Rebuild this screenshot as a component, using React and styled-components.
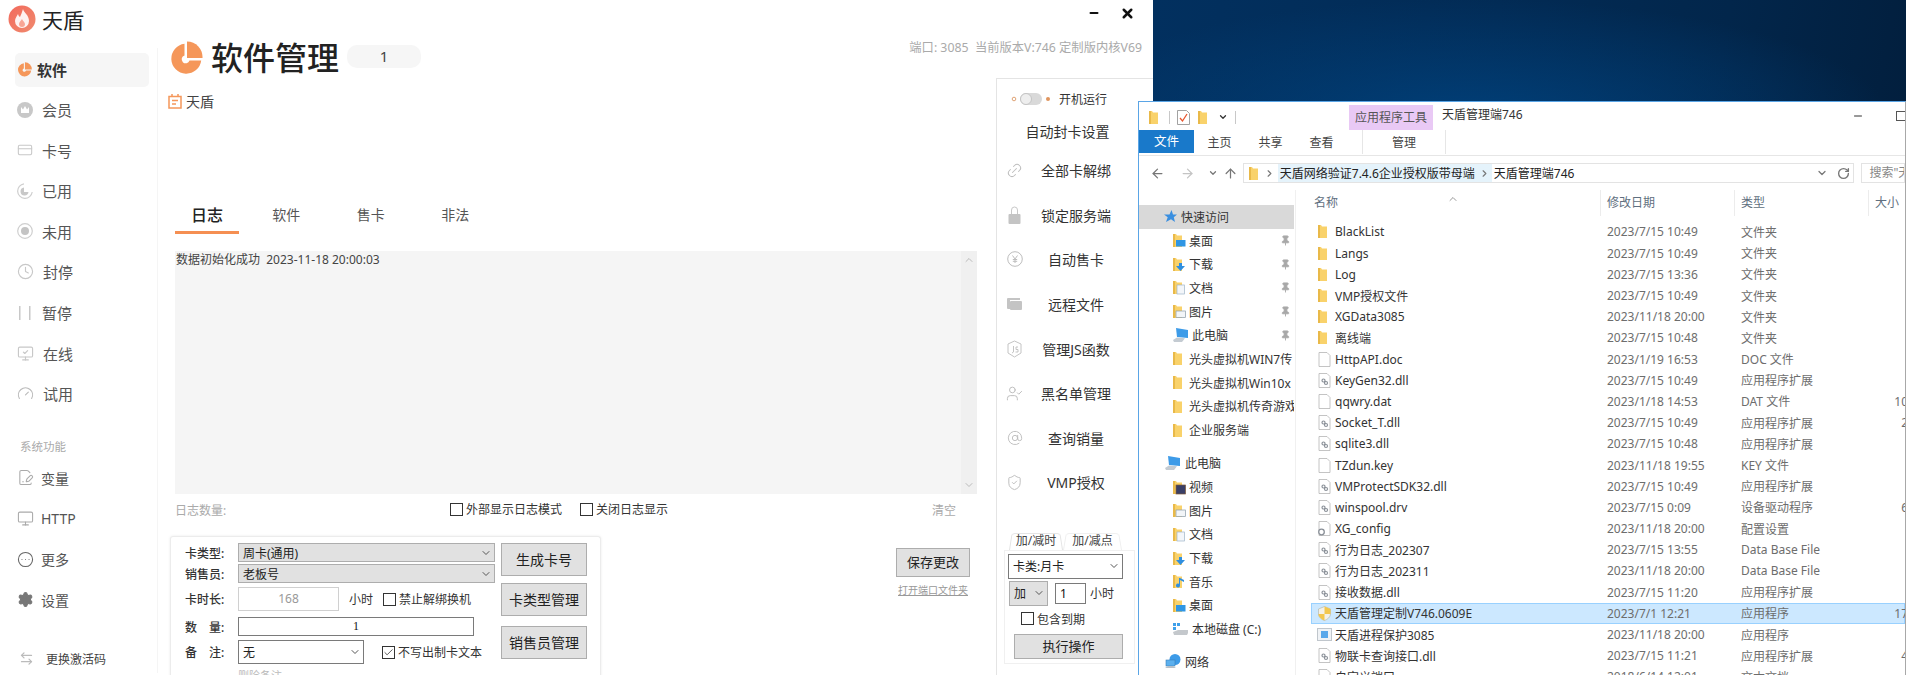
import React from 'react';
import styled, { createGlobalStyle } from 'styled-components';
import {
  Monitor, MonitorCheck, CircleEllipsis, Settings, ArrowLeftRight, Gauge, Clock,
  ArrowLeft, ArrowRight, ArrowUp, ChevronDown, ChevronRight, ChevronUp, RotateCw, Pin, Check, X, Minus,
  Link2, AtSign, ShieldCheck, UserCheck, FilePenLine, CreditCard,
} from 'lucide-react';

const Global = createGlobalStyle`
  html, body { margin: 0; padding: 0; background: #fff; }
  body {
    width: 1910px;
    height: 675px;
    overflow: hidden;
    font-family: "Noto Sans", "Noto Sans CJK SC", sans-serif;
    font-size: 12px;
    color: #333;
  }
  * { box-sizing: border-box; }
  svg { flex: none; }
`;

/* ---------- desktop ---------- */
const Desktop = styled.div`
  position: relative;
  display: flex;
  width: 1910px;
  height: 675px;
  overflow: hidden;
  background: #fff;
  filter: blur(0.4px);
`;
const Wallpaper = styled.div`
  width: 753px;
  height: 101px;
  background:
    radial-gradient(ellipse 420px 120px at 42% 118%, #013f78 0%, rgba(1, 60, 115, 0) 100%),
    linear-gradient(100deg, #02305f 0%, #022b55 45%, #02264b 75%, #021f3e 100%);
`;

/* ---------- app window ---------- */
const AppWindow = styled.div`
  display: flex;
  width: 1153px;
  height: 675px;
  background: #fff;
`;
const Sidebar = styled.aside`
  width: 158px;
  height: 675px;
  flex: none;
`;
const Brand = styled.div`
  display: flex;
  align-items: center;
  gap: 6px;
  height: 38px;
  padding-left: 8px;
  font-size: 21px;
  color: #222;
`;
const SideBody = styled.div`
  height: 625px;
  margin-top: 10px;
  padding-top: 5px;
  border-right: 1px solid #f5f5f5;
`;
const Nav = styled.nav`
  margin-left: 15px;
  width: 134px;
`;
const NavItem = styled.div`
  display: flex;
  align-items: center;
  height: 34px;
  margin-bottom: 6.6px;
  padding: 0 0 2px 2px;
  gap: ${p => (p.$active ? 5 : p.$sys ? 7 : 9)}px;
  border-radius: 5px;
  background: ${p => (p.$active ? '#f6f6f6' : 'transparent')};
  font-size: ${p => (p.$sys ? 14 : 15)}px;
  font-weight: ${p => (p.$active ? 600 : 400)};
  color: ${p => (p.$active ? '#333' : '#555')};
`;
const SectionLabel = styled.div`
  height: 16px;
  line-height: 16px;
  margin: 27.2px 0 7px 5px;
  font-size: 11.5px;
  color: #aaa;
`;
const SwapRow = styled.div`
  display: flex;
  align-items: center;
  gap: 12px;
  height: 20px;
  margin-top: 31px;
  margin-left: 19px;
  font-size: 12px;
  color: #444;
`;

const Main = styled.main`
  flex: 1;
  display: flex;
  flex-direction: column;
  min-width: 0;
`;
const WindowControls = styled.div`
  display: flex;
  justify-content: flex-end;
  align-items: center;
  gap: 20px;
  height: 26px;
  padding-right: 18px;
  color: #111;
`;
const TitleRow = styled.div`
  display: flex;
  align-items: center;
  height: 52px;
  padding: 12px 11px 0 11px;
`;
const PageTitle = styled.h1`
  margin: 0 8px 0 8px;
  font-size: 32px;
  font-weight: 500;
  line-height: 40px;
  color: #222;
`;
const CountPill = styled.div`
  width: 74px;
  height: 23px;
  line-height: 23px;
  margin-top: -4px;
  text-align: center;
  border-radius: 10px;
  background: #f6f6f6;
  font-size: 15px;
  color: #444;
`;
const PortInfo = styled.div`
  align-self: flex-start;
  margin-left: auto;
  margin-top: 1px;
  line-height: 18px;
  font-size: 12.3px;
  color: #aaa;
  white-space: pre;
`;
const Body = styled.div`
  flex: 1;
  display: flex;
  min-height: 0;
`;
const LeftCol = styled.div`
  width: 838px;
  flex: none;
`;
const Subtitle = styled.div`
  display: flex;
  align-items: center;
  gap: 4px;
  height: 18px;
  margin: 14px 0 0 10px;
  font-size: 14px;
  color: #444;
`;
const Tabs = styled.div`
  display: flex;
  height: 33px;
  margin: 91px 0 0 17px;
`;
const Tab = styled.div`
  width: ${p => (p.$active ? 64 : 84.5)}px;
  margin-right: ${p => (p.$active ? 5 : 0)}px;
  height: 33px;
  line-height: 28px;
  text-align: center;
  font-size: ${p => (p.$active ? 16 : 14)}px;
  font-weight: ${p => (p.$active ? 500 : 400)};
  color: ${p => (p.$active ? '#222' : '#555')};
  border-bottom: ${p => (p.$active ? '3px solid #f58f52' : 'none')};
`;
const LogBox = styled.div`
  display: flex;
  width: 802px;
  height: 243px;
  margin: 17px 0 0 17px;
  background: #f5f5f5;
`;
const LogText = styled.div`
  flex: 1;
  padding: 1px;
  line-height: 16px;
  font-size: 12px;
  color: #444;
  white-space: pre;
`;
const LogScroll = styled.div`
  display: flex;
  flex-direction: column;
  justify-content: space-between;
  align-items: center;
  width: 16px;
  padding: 3px 0;
  background: #f0f0f0;
  color: #bbb;
`;
const LogFooter = styled.div`
  display: flex;
  align-items: center;
  height: 32px;
  margin-left: 17px;
  width: 802px;
`;
const FootCell = styled.div`
  width: ${p => p.$w}px;
  flex: none;
  color: ${p => (p.$muted ? '#aaa' : '#333')};
`;
const ClearLink = styled.div`
  margin-left: auto;
  margin-right: 21px;
  color: #aaa;
`;
const BottomRow = styled.div`
  display: flex;
  margin-top: 10px;
`;
const Card = styled.div`
  display: flex;
  width: 431px;
  height: 160px;
  margin-left: 12px;
  padding: 6px 0 0 14px;
  border: 1px solid #ececec;
  border-bottom: none;
  border-radius: 3px 3px 0 0;
  box-shadow: 0 0 3px rgba(0, 0, 0, 0.08);
`;
const FormCol = styled.div`
  width: 310px;
  flex: none;
`;
const FormRow = styled.div`
  display: flex;
  align-items: center;
  margin-top: ${p => p.$mt || 0}px;
`;
const FieldLabel = styled.div`
  width: 53px;
  flex: none;
  white-space: pre;
  font-weight: 500;
  color: #333;
`;
const NativeSelect = styled.div`
  display: flex;
  align-items: center;
  justify-content: space-between;
  width: ${p => p.$w}px;
  height: ${p => p.$h}px;
  margin-left: ${p => p.$ml || 0}px;
  padding: 0 2px 0 4px;
  flex: none;
  border: 1px solid ${p => (p.$gray ? '#adadad' : '#7a7a7a')};
  background: ${p => (p.$gray ? '#e1e1e1' : '#fff')};
  color: #222;
  white-space: nowrap;
  svg { color: #555; }
`;
const NativeInput = styled.div`
  width: ${p => p.$w}px;
  height: ${p => p.$h}px;
  margin-left: ${p => p.$ml || 0}px;
  flex: none;
  line-height: ${p => p.$h - 2}px;
  text-align: ${p => p.$align || 'center'};
  padding: 0 4px;
  border: 1px solid ${p => (p.$muted ? '#d0d0d0' : '#7a7a7a')};
  color: ${p => (p.$muted ? '#999' : '#111')};
  font-family: ${p => (p.$serif ? '"Liberation Serif", serif' : 'inherit')};
  font-size: 12px;
`;
const InlineText = styled.span`
  margin-left: ${p => p.$ml || 0}px;
  white-space: nowrap;
`;
const CheckWrap = styled.label`
  display: inline-flex;
  align-items: center;
  gap: 3px;
  margin-left: ${p => p.$ml || 0}px;
  white-space: nowrap;
  color: #333;
`;
const CheckBox = styled.span`
  display: inline-flex;
  align-items: center;
  justify-content: center;
  width: 13px;
  height: 13px;
  border: 1px solid #333;
  background: #fff;
  svg { color: #222; }
`;
const HintText = styled.div`
  margin: 3px 0 0 53px;
  font-size: 11px;
  color: #bbb;
`;
const ButtonCol = styled.div`
  width: 86px;
  margin-left: 6px;
`;
const NativeButton = styled.div`
  width: ${p => p.$w || 86}px;
  height: ${p => p.$h || 33}px;
  margin-top: ${p => p.$mt || 0}px;
  margin-left: ${p => p.$ml || 0}px;
  line-height: ${p => (p.$h || 33) - 2}px;
  text-align: center;
  border: 1px solid #adadad;
  background: #e1e1e1;
  font-size: ${p => p.$fs || 14}px;
  color: #222;
`;
const SaveCol = styled.div`
  width: 74px;
  margin-left: 295px;
  margin-top: 12px;
`;
const PortLink = styled.div`
  margin-top: 6px;
  font-size: 10px;
  line-height: 14px;
  text-align: center;
  text-decoration: underline;
  color: #999;
  white-space: nowrap;
`;

/* ---------- right panel of the app ---------- */
const SidePanel = styled.div`
  width: 157px;
  flex: none;
  border-top: 1px solid #e4e4e4;
  border-left: 1px solid #e4e4e4;
`;
const AutoRunRow = styled.div`
  display: flex;
  align-items: center;
  gap: 8px;
  height: 40px;
  padding-left: 14px;
  color: #333;
`;
const PanelHeading = styled.div`
  width: 141px;
  height: 30px;
  padding-bottom: 5px;
  line-height: 25px;
  text-align: center;
  font-size: 14px;
  color: #333;
`;
const PanelItem = styled.div`
  display: grid;
  grid-template-columns: 35px 88px;
  align-items: center;
  justify-items: center;
  height: 44.6px;
  padding-bottom: 2px;
  font-size: 14px;
  color: #333;
  svg { color: #bdbdbd; }
`;
const DiagonalLink = styled(Link2)`
  transform: rotate(-45deg);
`;
const MiniTabs = styled.div`
  display: flex;
  height: 19px;
  margin: 25px 0 0 12px;
`;
const MiniTab = styled.div`
  position: relative;
  width: ${p => p.$w}px;
  height: 19px;
  line-height: 19px;
  text-align: center;
  color: #444;
  &::before {
    content: '';
    position: absolute;
    inset: 0;
    border: 1px solid ${p => (p.$active ? '#e4e4e4' : '#efefef')};
    border-bottom: none;
    border-radius: 4px 4px 0 0;
    transform: perspective(24px) rotateX(8deg);
    transform-origin: bottom;
  }
`;
const MiniPane = styled.div`
  width: 131px;
  height: 114px;
  margin-left: 7px;
  padding: 3px 3px 0;
  border: 1px solid #f0f0f0;
`;
const MiniButtonRow = styled.div`
  display: flex;
  align-items: center;
  margin-top: ${p => p.$mt || 0}px;
  margin-left: ${p => p.$ml || 0}px;
  height: ${p => p.$h || 25}px;
`;

/* ---------- explorer window ---------- */
const Explorer = styled.section`
  position: absolute;
  left: 1138px;
  top: 101px;
  width: 768px;
  height: 574px;
  display: flex;
  flex-direction: column;
  overflow: hidden;
  background: #fff;
  border-top: 1px solid #5aa5e6;
  border-left: 1px solid #5aa5e6;
  border-right: 1px solid #a8a8a8;
`;
const ExTitleBar = styled.div`
  display: flex;
  align-items: flex-end;
  height: 28px;
  flex: none;
`;
const QuickBar = styled.div`
  display: flex;
  align-items: center;
  height: 26px;
  width: 210px;
  padding-left: 9px;
  gap: 7px;
`;
const ToolSep = styled.span`
  width: 1px;
  height: 13px;
  background: #c8c8c8;
`;
const ContextTab = styled.div`
  width: 84px;
  height: 25px;
  line-height: 25px;
  text-align: center;
  background: #e9c9f5;
  color: #555;
`;
const ExTitle = styled.div`
  height: 28px;
  line-height: 26px;
  margin-left: 9px;
  color: #333;
`;
const ExButtons = styled.div`
  display: flex;
  align-items: center;
  height: 28px;
  margin-left: auto;
  margin-right: -1px;
  gap: 32px;
  color: #333;
`;
const MaxBox = styled.span`
  width: 10px;
  height: 10px;
  border: 1px solid #555;
`;
const Ribbon = styled.div`
  display: flex;
  height: 26px;
  flex: none;
  border-bottom: 1px solid #e6e6e6;
`;
const FileTab = styled.div`
  width: 55px;
  height: 23px;
  line-height: 23px;
  text-align: center;
  font-size: 12.5px;
  background: #1979ca;
  color: #fff;
`;
const RibbonTab = styled.div`
  width: 51px;
  height: 24px;
  line-height: 25px;
  text-align: center;
  color: #444;
`;
const RibbonCtx = styled(RibbonTab)`
  width: 84px;
  margin-left: 15px;
  border-left: 1px solid #e6e6e6;
  border-right: 1px solid #e6e6e6;
`;
const NavBar = styled.div`
  display: flex;
  align-items: center;
  height: 34px;
  flex: none;
  padding-left: 11px;
  color: #777;
`;
const NavBtn = styled.span`
  display: inline-flex;
  justify-content: center;
  width: ${p => p.$w}px;
  color: ${p => p.$c || '#777'};
`;
const AddressBar = styled.div`
  display: flex;
  align-items: center;
  width: 620px;
  height: 20px;
  margin-left: -3px;
  padding-left: 4px;
  border: 1px solid #e3e3e3;
  overflow: hidden;
  white-space: nowrap;
  color: #222;
`;
const Crumb = styled.span`
  display: inline-flex;
  align-items: center;
  height: 18px;
  padding: 0 2px;
  background: ${p => (p.$hl ? '#e5f3fb' : 'transparent')};
`;
const AddrSpacer = styled.span`
  flex: 1;
`;
const SearchBox = styled.div`
  width: 44px;
  height: 20px;
  margin-left: 7px;
  padding-left: 7px;
  line-height: 18px;
  border: 1px solid #e3e3e3;
  color: #888;
  white-space: nowrap;
  overflow: hidden;
`;
const ExBody = styled.div`
  flex: 1;
  display: flex;
  min-height: 0;
`;
const Tree = styled.div`
  width: 157px;
  flex: none;
  padding-top: 15px;
  border-right: 1px solid #f0f0f0;
`;
const TreeRow = styled.div`
  display: flex;
  align-items: center;
  width: 155px;
  height: 23.7px;
  margin-top: ${p => p.$mt || 0}px;
  padding-left: ${p => (p.$top ? 25 : 33)}px;
  gap: ${p => (p.$top ? 4 : 3)}px;
  background: ${p => (p.$sel ? '#d9d9d9' : 'transparent')};
  color: #333;
  white-space: nowrap;
  overflow: hidden;
`;
const PinMark = styled.span`
  display: inline-flex;
  margin-left: auto;
  margin-right: 3px;
  color: #a8a8a8;
`;
const FileList = styled.div`
  flex: 1;
  min-width: 0;
  padding-left: 15px;
`;
const ListHead = styled.div`
  display: grid;
  grid-template-columns: 289px 134px 134px 40px;
  height: 25px;
  margin-bottom: 6.4px;
  color: #5f6f80;
`;
const HeadCell = styled.div`
  position: relative;
  padding-left: ${p => (p.$first ? 3 : 6)}px;
  line-height: 26px;
  border-left: ${p => (p.$first ? 'none' : '1px solid #ececec')};
  white-space: nowrap;
`;
const SortCaret = styled.span`
  position: absolute;
  left: 136px;
  top: -2px;
  color: #999;
`;
const FileRow = styled.div`
  display: grid;
  grid-template-columns: 289px 134px 134px 40px;
  align-items: center;
  height: 21.2px;
  white-space: nowrap;
  background: ${p => (p.$sel ? '#cce8ff' : 'transparent')};
  box-shadow: ${p => (p.$sel ? 'inset 0 0 0 1px #99d1ff' : 'none')};
`;
const NameCell = styled.div`
  display: flex;
  align-items: center;
  gap: 4px;
  padding-left: 6px;
  color: #333;
`;
const IconSlot = styled.span`
  display: inline-flex;
  justify-content: center;
  width: 14px;
`;
const DataCell = styled.div`
  padding-left: 7px;
  color: #6d6d6d;
`;
const SizeCell = styled.div`
  text-align: right;
  color: #6d6d6d;
`;

/* ---------- drawn icons ---------- */
const LogoIcon = () => (
  <svg width="28" height="28" viewBox="0 0 28 28">
    <defs>
      <linearGradient id="logoFill" x1="0" y1="0" x2="1" y2="1">
        <stop offset="0" stopColor="#f26a5c" />
        <stop offset="1" stopColor="#f08a6e" />
      </linearGradient>
    </defs>
    <circle cx="14" cy="14" r="13.5" fill="url(#logoFill)" />
    <path d="M15 4c1 4 6 6 6 12a7 7 0 0 1-14 0c0-3 2-5 3-7 .5 1.500 1 2.500 2 3 1-2 2-5 3-8z" fill="#fff" opacity=".9" />
    <path d="M14 14c.5 2 3 3 3 5a3 3 0 0 1-6 0c0-2 2-3 3-5z" fill="#f8a594" />
  </svg>
);
const PieIcon = ({ size = 34 }) => (
  <svg width={size} height={size} viewBox="0 0 34 34" fill="#f5975a">
    <path d="M15.500 2.800A15 15 0 1 0 32.200 19.500H20.500a4 4 0 1 1-5-5z" />
    <path d="M18 0.500A15.500 15.500 0 0 1 33.500 17H18z" />
  </svg>
);
const CalendarIcon = () => (
  <svg width="14" height="15" viewBox="0 0 14 15" fill="none" stroke="#f5975a" strokeWidth="1.500">
    <rect x="1" y="2.500" width="12" height="11.500" />
    <path d="M4 0v3M10 0v3M4 6.500h6M4 10h4" />
  </svg>
);
const CrownIcon = () => (
  <svg width="16" height="16" viewBox="0 0 16 16">
    <circle cx="8" cy="8" r="8" fill="#c8c8c8" />
    <path d="M4 5l2 2.500L8 4l2 3.500L12 5v6H4z" fill="#fff" />
  </svg>
);
const UsedIcon = () => (
  <svg width="16" height="16" viewBox="0 0 16 16" fill="none">
    <path d="M7 .8A7.300 7.300 0 1 0 15.200 9" stroke="#cfcfcf" strokeWidth="1.200" />
    <path d="M7 4.500A4 4 0 1 0 11.500 9H7z" fill="#c8c8c8" />
  </svg>
);
const RadioIcon = () => (
  <svg width="16" height="16" viewBox="0 0 16 16">
    <circle cx="8" cy="8" r="7.300" fill="none" stroke="#cfcfcf" strokeWidth="1.200" />
    <circle cx="8" cy="8" r="4" fill="#c4c4c4" />
  </svg>
);
const PauseIcon = () => (
  <svg width="16" height="16" viewBox="0 0 16 16" fill="#c8c8c8">
    <rect x="2" y="1" width="1.500" height="14" />
    <rect x="12" y="1" width="1.500" height="14" />
  </svg>
);
const ToggleIcon = () => (
  <svg width="40" height="16" viewBox="0 0 40 16">
    <circle cx="3" cy="8" r="1.800" fill="none" stroke="#e0a477" />
    <rect x="9" y="2" width="22" height="12" rx="6" fill="#d9d9d9" />
    <circle cx="15" cy="8" r="5.500" fill="#eee" stroke="#c4c4c4" />
    <circle cx="37" cy="8" r="2" fill="#e0955e" />
  </svg>
);
const FilledFolder = () => (
  <svg width="15" height="14" viewBox="0 0 15 14" fill="#c4c4c4">
    <path d="M0 2a1 1 0 0 1 1-1h12v2H3v9H1a1 1 0 0 1-1-1z" />
    <rect x="3" y="4" width="12" height="9" rx="1" />
  </svg>
);
const LockIcon = () => (
  <svg width="13" height="18" viewBox="0 0 13 18">
    <path d="M3.500 8V4a3 3 0 0 1 6 0v4" fill="none" stroke="#c8c8c8" />
    <rect x="0.500" y="8" width="12" height="10" rx="1" fill="#c4c4c4" />
  </svg>
);
const YenCircle = () => (
  <svg width="16" height="16" viewBox="0 0 16 16" fill="none" stroke="#bdbdbd">
    <circle cx="8" cy="8" r="7.300" />
    <path d="M5.500 4.500L8 8l2.500-3.500M8 8v4M5.800 8.500h4.400M5.800 10.300h4.400" />
  </svg>
);
const JsShield = () => (
  <svg width="15" height="18" viewBox="0 0 15 18" fill="none" stroke="#c4c4c4">
    <path d="M7.500 1L14 4v9l-6.500 4L1 13V4z" />
    <path d="M6.500 6v6l-1.500 1M11 7H9v2.500h2V12H8.500" />
  </svg>
);

const FolderGlyph = ({ kind }) => (
  <svg width="14" height="15" viewBox="0 0 14 15">
    <path d="M1 1h3l1 1.500h5V14H1z" fill="#f9d26b" />
    <rect x="1" y="1" width="2" height="13" fill="#e9b949" />
    {kind === 'desk' && <rect x="4" y="7" width="9.500" height="6.500" fill="#2f96e4" />}
    {kind === 'down' && <path d="M7 6h3v3h3l-4.500 5L4 9h3z" fill="#2f8fe0" />}
    {kind === 'doc' && <rect x="5" y="5" width="7.500" height="9" fill="#f3f6fa" stroke="#9fb4c8" strokeWidth=".7" />}
    {kind === 'pic' && <rect x="4" y="7" width="9.500" height="6.500" fill="#f2f5f8" stroke="#8a9aa8" strokeWidth=".7" />}
    {kind === 'video' && <rect x="4" y="5" width="9.500" height="9" fill="#3a3f66" stroke="#7f5a3a" strokeWidth=".7" />}
    {kind === 'music' && <path d="M8 4v7.500a2 2 0 1 1-1-1.700V4zM8 4l4 2v2L8 6z" fill="#2f8fe0" />}
  </svg>
);
const StarIcon = () => (
  <svg width="13" height="13" viewBox="0 0 13 13">
    <path d="M7.500 0l1.500 4.500h4L9.800 7.300 11 12 7 9.300 2 12l1.700-4.700L0 4.500h5.500z" fill="#3a8fe0" />
  </svg>
);
const PcIcon = () => (
  <svg width="17" height="15" viewBox="0 0 17 15">
    <path d="M4 0l12 2v8L5 9z" fill="#3d9be8" />
    <path d="M1 12l4-2.500 8 .8L10 14H2z" fill="#c4cbd2" />
  </svg>
);
const DriveIcon = () => (
  <svg width="17" height="14" viewBox="0 0 17 14">
    <rect x="1" y="1" width="3" height="3" fill="#3fa0ea" />
    <rect x="5" y="1" width="3" height="3" fill="#3fa0ea" />
    <rect x="1" y="5" width="3" height="3" fill="#3fa0ea" />
    <path d="M1 10l5-2h10v3l-1 2H2z" fill="#c4c8cc" />
  </svg>
);
const NetIcon = () => (
  <svg width="17" height="16" viewBox="0 0 17 16">
    <circle cx="11" cy="5.500" r="5.500" fill="#3d9be8" />
    <rect x="2" y="6" width="9" height="6" fill="#5cb0ee" stroke="#3b7fb8" strokeWidth=".6" />
    <path d="M1 14l3-2h5l3 2z" fill="#b8c0c8" />
  </svg>
);
const PageIcon = ({ dll, gear }) => (
  <svg width="13" height="15" viewBox="0 0 13 15">
    <path d="M1 .5h8l3 3v11H1z" fill="#fff" stroke="#b5b5b5" strokeWidth=".8" />
    {dll && <path d="M4 7.500a1.500 1.500 0 1 1 3 0 1.500 1.500 0 1 1-3 0M6.500 10a1.500 1.500 0 1 1 3 0 1.500 1.500 0 1 1-3 0" fill="none" stroke="#8a9098" strokeWidth="1.200" />}
    {gear && <circle cx="3.500" cy="11" r="2.800" fill="#fff" stroke="#8a9098" strokeWidth="1.300" />}
  </svg>
);
const ShieldApp = () => (
  <svg width="13" height="15" viewBox="0 0 13 15">
    <path d="M6.500.5L12.500 3v5c0 3-3 5.500-6 6.500C3.500 13.500.5 11 .5 8V3z" fill="#f4f1e6" stroke="#b0b0a0" strokeWidth=".6" />
    <path d="M6.500.5L12.500 3v5H6.500z" fill="#f2c74e" />
    <path d="M6.500 8v6.500C3.500 13.500.5 11 .5 8z" fill="#f2c74e" />
  </svg>
);
const ProcessIcon = () => (
  <svg width="15" height="13" viewBox="0 0 15 13">
    <rect x=".5" y=".5" width="14" height="12" fill="#f0f3f6" stroke="#c0c6cc" />
    <rect x="4" y="3" width="7" height="7" fill="#5aa8ea" />
  </svg>
);
const DocToolIcon = () => (
  <svg width="13" height="15" viewBox="0 0 13 15">
    <path d="M.5.500h9l3 3v11H.5z" fill="#fff" stroke="#8a8a8a" strokeWidth=".8" />
    <path d="M3 8l2.500 3L10 4" fill="none" stroke="#e8552d" strokeWidth="1.300" />
  </svg>
);

const FileIcon = ({ kind }) => {
  if (kind === 'folder') return <FolderGlyph />;
  if (kind === 'dll') return <PageIcon dll />;
  if (kind === 'cfg') return <PageIcon gear />;
  if (kind === 'shield') return <ShieldApp />;
  if (kind === 'proc') return <ProcessIcon />;
  return <PageIcon />;
};

/* ---------- data ---------- */
const EXT = '应用程序扩展';
const files = [
  ['BlackList', '2023/7/15 10:49', '文件夹', '', 'folder'],
  ['Langs', '2023/7/15 10:49', '文件夹', '', 'folder'],
  ['Log', '2023/7/15 13:36', '文件夹', '', 'folder'],
  ['VMP授权文件', '2023/7/15 10:49', '文件夹', '', 'folder'],
  ['XGData3085', '2023/11/18 20:00', '文件夹', '', 'folder'],
  ['离线端', '2023/7/15 10:48', '文件夹', '', 'folder'],
  ['HttpAPI.doc', '2023/1/19 16:53', 'DOC 文件', '', 'page'],
  ['KeyGen32.dll', '2023/7/15 10:49', EXT, '', 'dll'],
  ['qqwry.dat', '2023/1/18 14:53', 'DAT 文件', '10', 'page'],
  ['Socket_T.dll', '2023/7/15 10:49', EXT, '2', 'dll'],
  ['sqlite3.dll', '2023/7/15 10:48', EXT, '', 'dll'],
  ['TZdun.key', '2023/11/18 19:55', 'KEY 文件', '', 'page'],
  ['VMProtectSDK32.dll', '2023/7/15 10:49', EXT, '', 'dll'],
  ['winspool.drv', '2023/7/15 0:09', '设备驱动程序', '6', 'dll'],
  ['XG_config', '2023/11/18 20:00', '配置设置', '', 'cfg'],
  ['行为日志_202307', '2023/7/15 13:55', 'Data Base File', '', 'dll'],
  ['行为日志_202311', '2023/11/18 20:00', 'Data Base File', '', 'dll'],
  ['接收数据.dll', '2023/7/15 11:20', EXT, '', 'dll'],
  ['天盾管理定制V746.0609E', '2023/7/1 12:21', '应用程序', '17', 'shield'],
  ['天盾进程保护3085', '2023/11/18 20:00', '应用程序', '', 'proc'],
  ['物联卡查询接口.dll', '2023/7/15 11:21', EXT, '4', 'dll'],
  ['自定义端口', '2018/6/14 12:01', '文本文档', '', 'page'],
];
const quickTree = [
  ['桌面', 'desk', true], ['下载', 'down', true], ['文档', 'doc', true], ['图片', 'pic', true],
  ['此电脑', 'pc', true], ['光头虚拟机WIN7传', '', false], ['光头虚拟机Win10x', '', false],
  ['光头虚拟机传奇游戏', '', false], ['企业服务端', '', false],
];
const pcTree = [
  ['视频', 'video'], ['图片', 'pic'], ['文档', 'doc'], ['下载', 'down'], ['音乐', 'music'], ['桌面', 'desk'],
];
const gray = { color: '#c8c8c8', strokeWidth: 1.6 };
const mainNav = [
  ['会员', <CrownIcon />], ['卡号', <CreditCard size={16} {...gray} />], ['已用', <UsedIcon />],
  ['未用', <RadioIcon />], ['封停', <Clock size={17} {...gray} />], ['暂停', <PauseIcon />],
  ['在线', <MonitorCheck size={17} {...gray} />], ['试用', <Gauge size={17} color="#bbb" strokeWidth={1.6} />],
];
const sysNav = [
  ['变量', <FilePenLine size={17} color="#aaa" strokeWidth={1.5} />],
  ['HTTP', <Monitor size={17} color="#aaa" strokeWidth={1.5} />],
  ['更多', <CircleEllipsis size={17} color="#666" strokeWidth={1.5} />],
  ['设置', <Settings size={17} color="#777" fill="#777" strokeWidth={1.5} />],
];
const panelItems = [
  ['全部卡解绑', <DiagonalLink size={17} strokeWidth={1.4} />],
  ['锁定服务端', <LockIcon />],
  ['自动售卡', <YenCircle />],
  ['远程文件', <FilledFolder />],
  ['管理JS函数', <JsShield />],
  ['黑名单管理', <UserCheck size={17} strokeWidth={1.4} />],
  ['查询销量', <AtSign size={16} strokeWidth={1.4} />],
  ['VMP授权', <ShieldCheck size={17} strokeWidth={1.4} />],
];

const Check2 = ({ checked, children, ml }) => (
  <CheckWrap $ml={ml}>
    <CheckBox>{checked && <Check size={11} strokeWidth={1.6} />}</CheckBox>
    {children}
  </CheckWrap>
);

export default function App() {
  return (
    <Desktop>
      <Global />
      <AppWindow>
        <Sidebar>
          <Brand><LogoIcon />天盾</Brand>
          <SideBody>
            <Nav>
              <NavItem $active><PieIcon size={15} />软件</NavItem>
              {mainNav.map(([label, icon]) => <NavItem key={label}>{icon}{label}</NavItem>)}
              <SectionLabel>系统功能</SectionLabel>
              {sysNav.map(([label, icon]) => <NavItem key={label} $sys>{icon}{label}</NavItem>)}
            </Nav>
            <SwapRow><ArrowLeftRight size={15} color="#bbb" />更换激活码</SwapRow>
          </SideBody>
        </Sidebar>
        <Main>
          <WindowControls>
            <Minus size={12} strokeWidth={4} />
            <X size={15} strokeWidth={4} />
          </WindowControls>
          <TitleRow>
            <PieIcon />
            <PageTitle>软件管理</PageTitle>
            <CountPill>1</CountPill>
            <PortInfo>端口: 3085  当前版本V:746 定制版内核V69</PortInfo>
          </TitleRow>
          <Body>
            <LeftCol>
              <Subtitle><CalendarIcon />天盾</Subtitle>
              <Tabs>
                <Tab $active>日志</Tab>
                <Tab>软件</Tab>
                <Tab>售卡</Tab>
                <Tab>非法</Tab>
              </Tabs>
              <LogBox>
                <LogText>数据初始化成功  2023-11-18 20:00:03</LogText>
                <LogScroll><ChevronUp size={12} /><ChevronDown size={12} /></LogScroll>
              </LogBox>
              <LogFooter>
                <FootCell $w={275} $muted>日志数量:</FootCell>
                <FootCell $w={130}><Check2>外部显示日志模式</Check2></FootCell>
                <FootCell $w={100}><Check2>关闭日志显示</Check2></FootCell>
                <ClearLink>清空</ClearLink>
              </LogFooter>
              <BottomRow>
                <Card>
                  <FormCol>
                    <FormRow>
                      <FieldLabel>卡类型:</FieldLabel>
                      <NativeSelect $w={257} $h={19} $gray>周卡(通用)<ChevronDown size={12} /></NativeSelect>
                    </FormRow>
                    <FormRow $mt={2}>
                      <FieldLabel>销售员:</FieldLabel>
                      <NativeSelect $w={257} $h={19} $gray>老板号<ChevronDown size={12} /></NativeSelect>
                    </FormRow>
                    <FormRow $mt={4}>
                      <FieldLabel>卡时长:</FieldLabel>
                      <NativeInput $w={101} $h={24} $muted>168</NativeInput>
                      <InlineText $ml={10}>小时</InlineText>
                      <Check2 ml={10}>禁止解绑换机</Check2>
                    </FormRow>
                    <FormRow $mt={6}>
                      <FieldLabel>数　量:</FieldLabel>
                      <NativeInput $w={236} $h={19} $serif>1</NativeInput>
                    </FormRow>
                    <FormRow $mt={4}>
                      <FieldLabel>备　注:</FieldLabel>
                      <NativeSelect $w={126} $h={24}>无<ChevronDown size={12} /></NativeSelect>
                      <Check2 checked ml={18}>不写出制卡文本</Check2>
                    </FormRow>
                    <HintText>删除备注</HintText>
                  </FormCol>
                  <ButtonCol>
                    <NativeButton>生成卡号</NativeButton>
                    <NativeButton $mt={7}>卡类型管理</NativeButton>
                    <NativeButton $mt={10}>销售员管理</NativeButton>
                  </ButtonCol>
                </Card>
                <SaveCol>
                  <NativeButton $w={74} $h={29} $fs={13}>保存更改</NativeButton>
                  <PortLink>打开端口文件夹</PortLink>
                </SaveCol>
              </BottomRow>
            </LeftCol>
            <SidePanel>
              <AutoRunRow><ToggleIcon />开机运行</AutoRunRow>
              <PanelHeading>自动封卡设置</PanelHeading>
              {panelItems.map(([label, icon]) => <PanelItem key={label}>{icon}<span>{label}</span></PanelItem>)}
              <MiniTabs>
                <MiniTab $w={54} $active>加/减时</MiniTab>
                <MiniTab $w={59}>加/减点</MiniTab>
              </MiniTabs>
              <MiniPane>
                <NativeSelect $w={115} $h={25}>卡类:月卡<ChevronDown size={12} /></NativeSelect>
                <MiniButtonRow $mt={2}>
                  <NativeSelect $w={39} $h={25} $ml={1} $gray>加<ChevronDown size={12} /></NativeSelect>
                  <NativeInput $w={31} $h={21} $ml={7} $align="left">1</NativeInput>
                  <InlineText $ml={4}>小时</InlineText>
                </MiniButtonRow>
                <MiniButtonRow $mt={3} $ml={13} $h={20}><Check2>包含到期</Check2></MiniButtonRow>
                <NativeButton $w={109} $h={25} $mt={5} $ml={6} $fs={13}>执行操作</NativeButton>
              </MiniPane>
            </SidePanel>
          </Body>
        </Main>
      </AppWindow>
      <Wallpaper />

      <Explorer>
        <ExTitleBar>
          <QuickBar>
            <FolderGlyph />
            <ToolSep />
            <DocToolIcon />
            <FolderGlyph />
            <ChevronDown size={10} color="#333" strokeWidth={3} />
            <ToolSep />
          </QuickBar>
          <ContextTab>应用程序工具</ContextTab>
          <ExTitle>天盾管理端746</ExTitle>
          <ExButtons><Minus size={12} /><MaxBox /></ExButtons>
        </ExTitleBar>
        <Ribbon>
          <FileTab>文件</FileTab>
          <RibbonTab>主页</RibbonTab>
          <RibbonTab>共享</RibbonTab>
          <RibbonTab>查看</RibbonTab>
          <RibbonCtx>管理</RibbonCtx>
        </Ribbon>
        <NavBar>
          <NavBtn $w={16}><ArrowLeft size={15} /></NavBtn>
          <NavBtn $w={45} $c="#c4c4c4"><ArrowRight size={15} /></NavBtn>
          <NavBtn $w={6}><ChevronDown size={10} strokeWidth={3} /></NavBtn>
          <NavBtn $w={30}><ArrowUp size={15} /></NavBtn>
          <AddressBar>
            <FolderGlyph />
            <NavBtn $w={16}><ChevronRight size={11} strokeWidth={2.5} /></NavBtn>
            <Crumb $hl>天盾网络验证7.4.6企业授权版带母端</Crumb>
            <Crumb $hl><ChevronRight size={11} strokeWidth={2.5} color="#777" /></Crumb>
            <Crumb>天盾管理端746</Crumb>
            <AddrSpacer />
            <NavBtn $w={22}><ChevronDown size={12} strokeWidth={2.5} /></NavBtn>
            <NavBtn $w={20}><RotateCw size={13} strokeWidth={2.5} /></NavBtn>
          </AddressBar>
          <SearchBox>搜索"天</SearchBox>
        </NavBar>
        <ExBody>
          <Tree>
            <TreeRow $top $sel><StarIcon />快速访问</TreeRow>
            {quickTree.map(([label, kind, pinned]) => (
              <TreeRow key={label}>
                {kind === 'pc' ? <PcIcon /> : <FolderGlyph kind={kind} />}
                {label}
                {pinned && <PinMark><Pin size={11} fill="#a8a8a8" /></PinMark>}
              </TreeRow>
            ))}
            <TreeRow $top $mt={9.6}><PcIcon />此电脑</TreeRow>
            {pcTree.map(([label, kind]) => (
              <TreeRow key={kind}><FolderGlyph kind={kind} />{label}</TreeRow>
            ))}
            <TreeRow><DriveIcon />本地磁盘 (C:)</TreeRow>
            <TreeRow $top $mt={9.4}><NetIcon />网络</TreeRow>
          </Tree>
          <FileList>
            <ListHead>
              <HeadCell $first>名称<SortCaret><ChevronUp size={12} /></SortCaret></HeadCell>
              <HeadCell>修改日期</HeadCell>
              <HeadCell>类型</HeadCell>
              <HeadCell>大小</HeadCell>
            </ListHead>
            {files.map(([name, date, type, size, kind]) => (
              <FileRow key={name} $sel={kind === 'shield'}>
                <NameCell><IconSlot><FileIcon kind={kind} /></IconSlot>{name}</NameCell>
                <DataCell>{date}</DataCell>
                <DataCell>{type}</DataCell>
                <SizeCell>{size}</SizeCell>
              </FileRow>
            ))}
          </FileList>
        </ExBody>
      </Explorer>
    </Desktop>
  );
}
